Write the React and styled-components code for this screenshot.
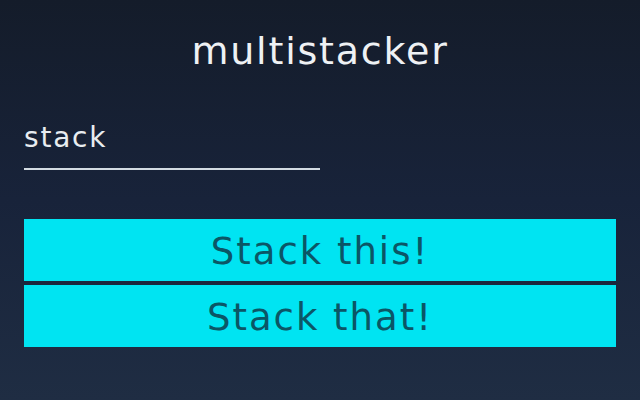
import styled, { createGlobalStyle } from "styled-components";

const GlobalStyle = createGlobalStyle`
    html, body {
        margin: 0;
        padding: 0;
        height: 100%;
    }
    body {
        font-family: "DejaVu Sans", "Open Sans", sans-serif;
    }
`;

const Page = styled.div`
    width: 640px;
    height: 400px;
    box-sizing: border-box;
    padding: 23px 24px 0;
    background: linear-gradient(180deg, #141c2a 0%, #18233a 50%, #1f2d43 100%);
    display: flex;
    flex-direction: column;
`;

const Title = styled.h1`
    margin: 0;
    color: #eef1f4;
    font-family: "DejaVu Sans", sans-serif;
    font-size: 38px;
    font-weight: 400;
    letter-spacing: 1.8px;
    line-height: 56px;
    text-align: center;
`;

const Field = styled.input`
    margin-top: 41px;
    width: 296px;
    box-sizing: content-box;
    background: transparent;
    border: none;
    border-bottom: 2px solid #d3dbe2;
    color: #e8ecf0;
    font-family: "DejaVu Sans", sans-serif;
    font-size: 28px;
    letter-spacing: 1.8px;
    line-height: 36px;
    height: 36px;
    padding: 0 0 12px;
    outline: none;
`;

const Buttons = styled.div`
    margin-top: 49px;
    display: flex;
    flex-direction: column;
    gap: 4px;
`;

const StackButton = styled.button`
    height: 62px;
    border: none;
    background: #00e4f2;
    color: #0b5666;
    font-family: "DejaVu Sans", sans-serif;
    font-size: 37px;
    letter-spacing: 2px;
    padding: 3px 0 0;
    cursor: pointer;
`;

export default function App() {
    return (
        <>
            <GlobalStyle />
            <Page>
                <Title>multistacker</Title>
                <Field defaultValue="stack" />
                <Buttons>
                    <StackButton>Stack this!</StackButton>
                    <StackButton>Stack that!</StackButton>
                </Buttons>
            </Page>
        </>
    );
}
